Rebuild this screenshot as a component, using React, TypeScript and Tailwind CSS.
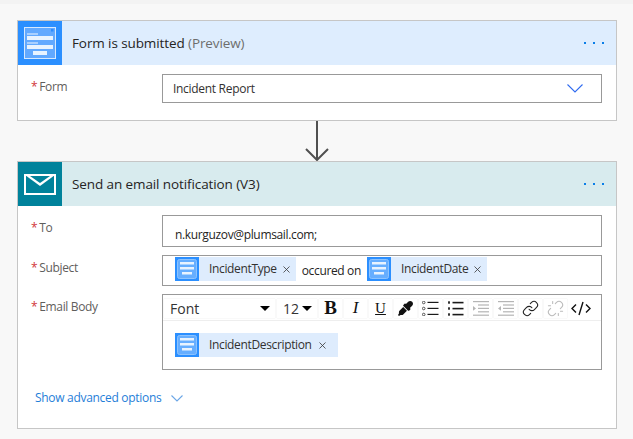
import { X, Link, Unlink } from 'lucide-react';
import { FaEyeDropper } from 'react-icons/fa';
import type { ReactNode } from 'react';

const font = "font-['Open_Sans','Noto_Sans',sans-serif]";

/* ── Icons ── */
function FormsLogo() {
  return (
    <svg width="32" height="32" viewBox="0 0 32 32" className="block">
      <rect x="0.5" y="0.5" width="31" height="31" fill="#62a9ff" stroke="#d6e9ff" />
      <rect x="27" y="2" width="2.5" height="2.5" fill="#2b8cff" />
      <rect x="3" y="6" width="11" height="2" fill="#a9d0ff" />
      <rect x="3" y="9" width="26" height="4" fill="#e8f3ff" />
      <rect x="3" y="15" width="11" height="2" fill="#a9d0ff" />
      <rect x="3" y="18" width="26" height="4" fill="#e8f3ff" />
      <rect x="9" y="24" width="14" height="4" fill="#e8f3ff" />
    </svg>
  );
}

function TokenIcon() {
  return (
    <div className="w-6 h-6 bg-[#2b8fff] flex items-center justify-center shrink-0">
      <svg width="20" height="20" viewBox="0 0 20 20" className="block">
        <rect x="0.5" y="0.5" width="19" height="19" rx="2" fill="#66aeff" stroke="#8cc3ff" />
        <rect x="3" y="3" width="14" height="2.5" fill="#e8f3ff" />
        <rect x="3" y="8" width="14" height="2.5" fill="#e8f3ff" />
        <rect x="5" y="13" width="10" height="2.5" fill="#e8f3ff" />
      </svg>
    </div>
  );
}

function MailLogo() {
  return (
    <svg width="32" height="21" viewBox="0 0 32 21" className="block">
      <rect x="1" y="1" width="30" height="19" fill="none" stroke="#fff" strokeWidth="2" />
      <path d="M1 1 L16 12 L31 1" fill="#fff" />
      <path d="M6 2 L16 9 L26 2" fill="#00829b" />
    </svg>
  );
}

function Dots() {
  return (
    <div className="flex gap-[7px] mr-[12px]">
      <span className="w-[2px] h-[2px] bg-[#0a7ee8]" />
      <span className="w-[2px] h-[2px] bg-[#0a7ee8]" />
      <span className="w-[2px] h-[2px] bg-[#0a7ee8]" />
    </div>
  );
}

function Chevron({ w, h, color }: { w: number; h: number; color: string }) {
  return (
    <svg width={w} height={h} viewBox={`0 0 ${w} ${h}`} className="block shrink-0">
      <path d={`M0.5 0.5 L${w / 2} ${h - 1} L${w - 0.5} 0.5`} fill="none" stroke={color} strokeWidth="1.1" />
    </svg>
  );
}

function Lines({ kind }: { kind: 'bullet' | 'number' | 'indent' | 'outdent' }) {
  const color = kind === 'indent' || kind === 'outdent' ? '#b5b5b5' : '#1a1a1a';
  if (kind === 'bullet' || kind === 'number') {
    return (
      <svg width="17" height="15" viewBox="0 0 17 15">
        {[1.5, 7.5, 13.5].map((y) => (
          <g key={y}>
            {kind === 'bullet' ? (
              <circle cx="1.7" cy={y} r="1.3" fill="none" stroke="#444" strokeWidth="0.9" />
            ) : (
              <rect x="1" y={y - 1.2} width="2" height="2.4" fill="#333" />
            )}
            <rect x="5.5" y={y - 0.7} width="11" height={kind === 'number' ? 1.6 : 1.2} fill={color} />
          </g>
        ))}
      </svg>
    );
  }
  return (
    <svg width="17" height="15" viewBox="0 0 17 15">
      <rect x="1" y="0" width="16" height="1.2" fill={color} />
      <rect x="6" y="3.4" width="11" height="1.2" fill={color} />
      <rect x="6" y="6.8" width="11" height="1.2" fill={color} />
      <rect x="6" y="10.2" width="11" height="1.2" fill={color} />
      <rect x="1" y="13.6" width="16" height="1.2" fill={color} />
      {kind === 'indent' ? <path d="M1 5 L4 7.4 L1 9.8 Z" fill={color} /> : <path d="M4 5 L1 7.4 L4 9.8 Z" fill={color} />}
    </svg>
  );
}

/* ── Pieces ── */
function CardHead({ bg, iconBg, icon, children }: { bg: string; iconBg: string; icon: ReactNode; children: ReactNode }) {
  return (
    <div className={`h-11 flex items-center ${bg}`}>
      <div className={`w-11 h-11 flex items-center justify-center shrink-0 ${iconBg}`}>{icon}</div>
      <div className="flex-1 pl-[10px] text-[13.5px] tracking-[-0.1px] text-[#252423]">{children}</div>
      <Dots />
    </div>
  );
}

function Field({ label, children, className }: { label: string; children: ReactNode; className?: string }) {
  return (
    <div className={`flex ${className ?? ''}`}>
      <div className="w-[144px] shrink-0 pl-[13px] pt-[5px] text-[12px] tracking-[-0.35px] leading-[16px] text-[#5f5e5c]">
        <span className="text-[#d13438] mr-[2px]">*</span>
        {label}
      </div>
      {children}
    </div>
  );
}

function Token({ name, closeGap }: { name: string; closeGap: string }) {
  return (
    <div className="inline-flex items-center h-6 bg-[#deecfd] shrink-0">
      <TokenIcon />
      <span className="ml-[10px] text-[12px] tracking-[-0.35px] text-[#323130]">{name}</span>
      <X size={11} strokeWidth={1.7} className={`text-[#333] ${closeGap}`} />
    </div>
  );
}

function ToolBtn({ children, className }: { children: ReactNode; className?: string }) {
  return (
    <div className={`h-[19px] w-[23px] bg-white shadow-[0_0_1px_#d8d8d8] flex items-center justify-center shrink-0 ${className ?? ''}`}>
      {children}
    </div>
  );
}

function SelectBtn({ label, width }: { label: string; width: string }) {
  return (
    <div className={`h-[19px] bg-white shadow-[0_0_1px_#d8d8d8] flex items-center justify-between shrink-0 pl-[6px] pr-[5px] ${width}`}>
      <span className="text-[14px] text-[#333]">{label}</span>
      <span className="w-0 h-0 border-x-[5px] border-x-transparent border-t-[5px] border-t-black" />
    </div>
  );
}

export default function App() {
  return (
    <div className={`w-[633px] h-[439px] bg-[#f8f8f8] overflow-hidden ${font}`}>
      <div className="h-1 bg-[#f3f3f3]" />

      <div className="ml-[17px] mt-4 w-[600px] h-[101px] bg-white border border-[#c6c6c6]">
        <CardHead bg="bg-[#deedfe]" iconBg="bg-[#2b8fff]" icon={<FormsLogo />}>
          Form is submitted <span className="text-[#6d6d6d]">(Preview)</span>
        </CardHead>
        <div className="pt-[9px]">
          <Field label="Form">
            <div className="w-[440px] h-[29px] border border-[#999] flex items-center justify-between pl-[10px] pr-[18px] text-[12px] tracking-[-0.3px] text-[#323130]">
              Incident Report
              <Chevron w={16} h={9} color="#2f6bf0" />
            </div>
          </Field>
        </div>
      </div>

      <div className="ml-[305px] w-[24px] h-10 flex justify-center">
        <svg width="24" height="40" viewBox="0 0 24 40">
          <path d="M12 0 V39 M1 28 L12 39 L23 28" fill="none" stroke="#505050" strokeWidth="2" />
        </svg>
      </div>

      <div className="ml-[17px] w-[600px] h-[268px] bg-white border border-[#c6c6c6]">
        <CardHead bg="bg-[#d8ebee]" iconBg="bg-[#00829b]" icon={<MailLogo />}>
          Send an email notification (V3)
        </CardHead>
        <div className="pt-[9px] flex flex-col gap-[8px]">
          <Field label="To">
            <div className="w-[440px] h-[32px] border border-[#999] pl-[12px] pt-[10px] text-[12px] tracking-[-0.35px] leading-[18px] text-[#252423]">
              n.kurguzov@plumsail.com;
            </div>
          </Field>
          <Field label="Subject">
            <div className="w-[440px] h-[31px] border border-[#999] pl-[12px] pt-[1px] flex text-[12px] tracking-[-0.35px] text-[#252423]">
              <Token name="IncidentType" closeGap="ml-[4px] mr-[4px]" />
              <span className="mx-[6px] mt-[5px] leading-[18px]">occured on</span>
              <Token name="IncidentDate" closeGap="ml-[4px] mr-[4px]" />
            </div>
          </Field>
          <Field label="Email Body">
            <div className="w-[440px] h-[76px] border border-[#999]">
              <div className="h-[26px] flex items-center gap-[2px] pl-[1px] pt-[1px] border-b border-[#eee]">
                <SelectBtn label="Font" width="w-[111px]" />
                <SelectBtn label="12" width="w-[40px]" />
                <ToolBtn>
                  <span className="font-['Liberation_Serif',serif] font-bold text-[19px] text-[#111]">B</span>
                </ToolBtn>
                <ToolBtn>
                  <span className="font-['Liberation_Serif',serif] italic text-[17px] text-[#111]">I</span>
                </ToolBtn>
                <ToolBtn>
                  <span className="font-['Liberation_Serif',serif] underline text-[15px] text-[#111]">U</span>
                </ToolBtn>
                <ToolBtn>
                  <FaEyeDropper size={15} className="text-[#111]" />
                </ToolBtn>
                <ToolBtn>
                  <Lines kind="bullet" />
                </ToolBtn>
                <ToolBtn>
                  <Lines kind="number" />
                </ToolBtn>
                <ToolBtn>
                  <Lines kind="indent" />
                </ToolBtn>
                <ToolBtn>
                  <Lines kind="outdent" />
                </ToolBtn>
                <ToolBtn>
                  <Link size={17} strokeWidth={1.5} className="text-[#222]" />
                </ToolBtn>
                <ToolBtn>
                  <Unlink size={17} strokeWidth={1.5} className="text-[#bbb]" />
                </ToolBtn>
                <div className="w-[23px] h-[19px] flex items-center justify-center shrink-0">
                  <svg width="20" height="15" viewBox="0 0 20 15">
                    <path d="M5 3.5 L1 7.5 L5 11.5 M15 3.5 L19 7.5 L15 11.5 M12 1 L8 14" fill="none" stroke="#111" strokeWidth="1.4" />
                  </svg>
                </div>
              </div>
              <div className="pl-[12px] pt-[12px]">
                <Token name="IncidentDescription" closeGap="ml-[5px] mr-[10px]" />
              </div>
            </div>
          </Field>
          <div className="mt-[11px] pl-[17px] flex items-center gap-[10px] text-[12px] tracking-[-0.3px] text-[#1f7ed8]">
            Show advanced options
            <Chevron w={12} h={7} color="#6ba6e6" />
          </div>
        </div>
      </div>
    </div>
  );
}
